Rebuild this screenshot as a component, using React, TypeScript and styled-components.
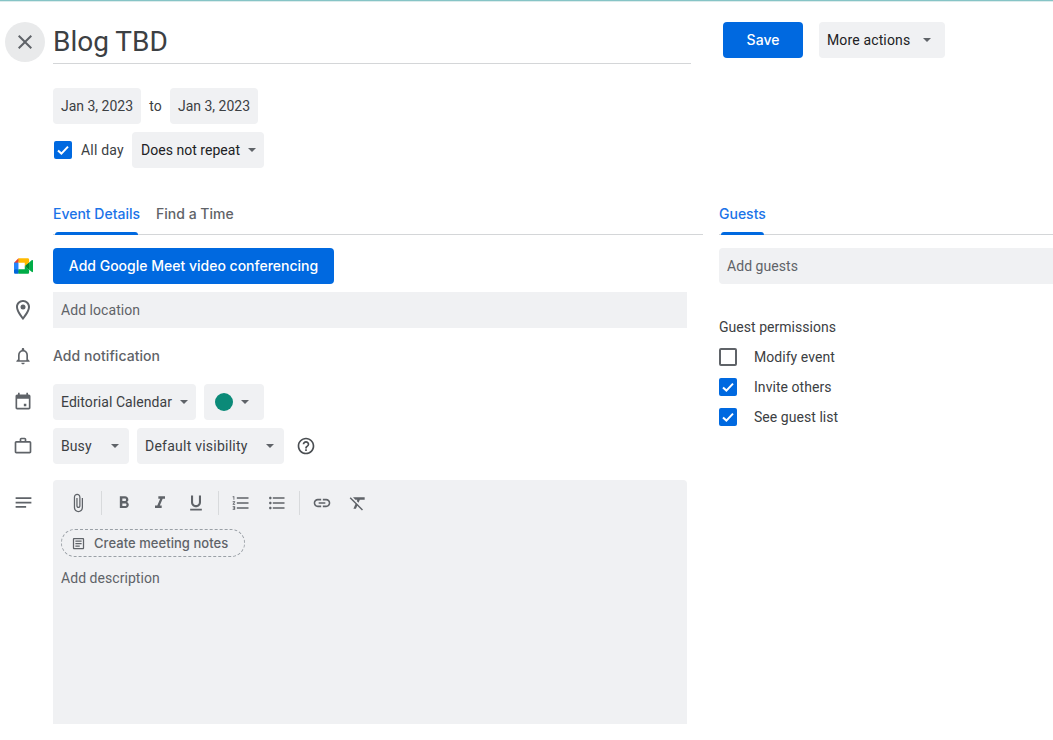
import React from "react";
import styled, { createGlobalStyle } from "styled-components";

const BLUE = "#0069e0";
const GREY = "#f0f1f3";
const TEXT = "#3c4043";
const MUTED = "#5f6368";
const HEAD = `"Inter", "Roboto", "Liberation Sans", sans-serif`;

const Global = createGlobalStyle`
  html, body { margin: 0; padding: 0; background: #fff; }
  body { font-family: "Roboto", "Liberation Sans", sans-serif; font-size: 14px; color: ${TEXT}; }
  * { box-sizing: border-box; }
`;

const Page = styled.div`
  width: 1053px;
  height: 740px;
  overflow: hidden;
  border-top: 1px solid #86c4c6;
  box-shadow: inset 0 1px 0 #dcecec;
`;
const Header = styled.header`
  display: flex;
  align-items: flex-start;
  padding: 21px 0 0 5px;
`;
const CloseButton = styled.button`
  width: 40px;
  height: 40px;
  border: 0;
  padding: 0;
  margin-right: 8px;
  border-radius: 50%;
  background: #e9eaeb;
  display: flex;
  align-items: center;
  justify-content: center;
  color: ${MUTED};
`;
const TitleField = styled.div`
  width: 638px;
  height: 42px;
  border-bottom: 1px solid #d4d6d8;
  font-family: "Roboto", sans-serif;
  font-size: 28px;
  line-height: 40px;
  color: ${TEXT};
  margin-right: 32px;
`;
const Button = styled.button<{ $w: number }>`
  width: ${(p) => p.$w}px;
  height: 36px;
  border: 0;
  border-radius: 4px;
  background: ${BLUE};
  color: #fff;
  font-family: ${HEAD};
  font-weight: 500;
  font-size: 14px;
  padding: 0 0 2px;
`;
const Select = styled.div<{ $w: number; $dark?: boolean }>`
  width: ${(p) => p.$w}px;
  height: 36px;
  border-radius: 4px;
  background: ${GREY};
  padding: 0 8px;
  display: flex;
  align-items: center;
  justify-content: space-between;
  font-size: 14px;
  letter-spacing: 0.07px;
  white-space: nowrap;
  color: ${(p) => (p.$dark ? "#202124" : TEXT)};
`;
const Caret = styled.span<{ $flush?: boolean }>`
  width: 0;
  height: 0;
  flex: none;
  margin: 0 ${(p) => (p.$flush ? 0 : 2)}px 1px 0;
  border-left: 4px solid transparent;
  border-right: 4px solid transparent;
  border-top: 4px solid ${MUTED};
`;
const MoreSelect = styled(Select)`
  margin-left: 16px;
  padding-right: 12px;
  letter-spacing: 0.14px;
`;
const When = styled.section`
  padding: 24px 0 0 53px;
  display: flex;
  flex-direction: column;
  gap: 8px;
`;
const Line = styled.div`
  display: flex;
  align-items: center;
`;
const DateChip = styled(Select)`
  justify-content: center;
  padding: 0;
  letter-spacing: 0;
`;
const To = styled.span`
  width: 29px;
  text-align: center;
  color: ${TEXT};
`;
const Box = styled.span<{ $on?: boolean }>`
  width: 18px;
  height: 18px;
  flex: none;
  border-radius: 2px;
  display: flex;
  align-items: center;
  justify-content: center;
  background: ${(p) => (p.$on ? BLUE : "#fff")};
  border: ${(p) => (p.$on ? "0" : `2px solid ${MUTED}`)};
`;
const AllDayBox = styled(Box)`
  margin: 0 9px 0 1px;
`;
const AllDay = styled.span`
  width: 51px;
  letter-spacing: 0.2px;
`;
const RepeatSelect = styled(Select)`
  padding-left: 9px;
  letter-spacing: 0.03px;
`;
const VisibilitySelect = styled(Select)`
  letter-spacing: 0.24px;
`;
const Columns = styled.div`
  display: grid;
  grid-template-columns: 703px 334px;
  column-gap: 16px;
  padding-top: 35px;
`;
const Tabs = styled.div<{ $inset?: boolean }>`
  height: 32px;
  margin-left: ${(p) => (p.$inset ? 53 : 0)}px;
  border-bottom: 1px solid #d4d6d8;
  display: flex;
  gap: 16px;
`;
const Tab = styled.div<{ $on?: boolean }>`
  position: relative;
  height: 32px;
  line-height: 21px;
  font-family: ${HEAD};
  font-weight: 500;
  color: ${(p) => (p.$on ? "#1a73e8" : MUTED)};
  ${(p) =>
    p.$on &&
    `&::after { content: ""; position: absolute; left: 2px; right: 2px; bottom: 0; height: 3px; border-radius: 3px 3px 0 0; background: ${BLUE}; }`}
`;
const Details = styled.div`
  display: flex;
  flex-direction: column;
  padding-top: 13px;
`;
const Row = styled.div<{ $h?: number; $mb?: number }>`
  display: flex;
  align-items: center;
  height: ${(p) => p.$h ?? 36}px;
  margin-bottom: ${(p) => p.$mb ?? 8}px;
`;
const IconSlot = styled.div`
  width: 53px;
  flex: none;
  display: flex;
  justify-content: center;
  padding-right: 7px;
  color: ${MUTED};
`;
const Field = styled.div<{ $w?: number }>`
  width: ${(p) => (p.$w ? `${p.$w}px` : "100%")};
  height: 36px;
  background: ${GREY};
  padding: 0 8px;
  line-height: 36px;
  letter-spacing: 0.05px;
  color: ${MUTED};
`;
const GuestField = styled(Field)`
  border-radius: 4px 0 0 4px;
`;
const Notification = styled.div`
  font-family: ${HEAD};
  font-weight: 500;
  letter-spacing: 0.05px;
  padding-bottom: 2px;
  color: ${MUTED};
`;
const Pair = styled.div`
  display: flex;
  align-items: center;
  gap: 8px;
`;
const Dot = styled.span`
  width: 18px;
  height: 18px;
  border-radius: 50%;
  background: #0b8a78;
  margin-left: 3px;
`;
const ColorSelect = styled(Select)`
  padding-right: 13px;
`;
const Help = styled.span`
  display: flex;
  margin-left: 12px;
  color: #4a4e52;
`;
const EditorRow = styled.div`
  display: flex;
  align-items: flex-start;
  margin-top: 16px;
`;
const NotesSlot = styled(IconSlot)`
  padding-top: 12px;
`;
const Editor = styled.div`
  width: 634px;
  height: 244px;
  background: ${GREY};
  border-radius: 4px 4px 0 0;
  padding: 5px 8px 0;
`;
const Toolbar = styled.div`
  display: flex;
  align-items: center;
  height: 36px;
  margin-left: -1px;
`;
const Tool = styled.span`
  width: 36px;
  height: 36px;
  display: flex;
  align-items: center;
  justify-content: center;
  color: ${MUTED};
`;
const Divider = styled.span<{ $wide?: boolean }>`
  width: 1px;
  height: 24px;
  background: #d8dadc;
  margin: 0 4px 0 ${(p) => (p.$wide ? 5 : 4)}px;
`;
const ChipLine = styled.div`
  display: flex;
  margin-top: 8px;
`;
const MeetingChip = styled.div`
  width: 184px;
  height: 28px;
  border: 1px dashed #9aa0a6;
  border-radius: 14px;
  display: flex;
  align-items: center;
  gap: 8px;
  padding-left: 9px;
  font-family: ${HEAD};
  font-size: 13px;
  font-weight: 500;
  letter-spacing: 0.05px;
  color: ${MUTED};
`;
const Description = styled.div`
  margin-top: 13px;
  letter-spacing: 0.05px;
  color: ${MUTED};
`;
const Guests = styled.div`
  display: flex;
  flex-direction: column;
  padding-top: 13px;
`;
const PermTitle = styled.div`
  margin-top: 34px;
  letter-spacing: 0.03px;
  line-height: 18px;
  height: 18px;
  color: ${TEXT};
`;
const Perms = styled.div`
  margin-top: 12px;
  display: flex;
  flex-direction: column;
  gap: 12px;
`;
const Perm = styled.label`
  display: flex;
  align-items: center;
  height: 18px;
  gap: 17px;
  letter-spacing: 0.05px;
  color: ${TEXT};
`;

const I = ({ d, size = 24, children }: { d?: string; size?: number; children?: React.ReactNode }) => (
  <svg width={size} height={size} viewBox="0 0 24 24" fill="currentColor" aria-hidden>
    {d && <path d={d} />}
    {children}
  </svg>
);
const Check = () => (
  <svg width="14" height="14" viewBox="0 0 14 14" fill="none" stroke="#fff" strokeWidth="2" aria-hidden>
    <path d="M2 7.4l3.4 3.2L12 3.6" />
  </svg>
);
const MeetLogo = () => (
  <svg width="19" height="16" viewBox="0 0 87.5 72" aria-hidden>
    <path fill="#00832d" d="M49.5 36l8.53 9.75 11.47 7.33 2-17.02-2-16.64-11.69 6.44z" />
    <path fill="#0066da" d="M0 51.5V66c0 3.315 2.685 6 6 6h14.5l3-10.96-3-9.54-9.95-3z" />
    <path fill="#e94235" d="M20.5 0L0 20.5l10.55 3 9.95-3 2.95-9.41z" />
    <path fill="#2684fc" d="M20.5 20.5H0v31h20.5z" />
    <path fill="#00ac47" d="M82.6 8.68L69.5 19.42v33.66l13.16 10.79c1.97 1.54 4.85.135 4.85-2.37V11c0-2.535-2.945-3.925-4.91-2.32zM49.5 36v15.5h-29V72h43c3.315 0 6-2.685 6-6V53.08z" />
    <path fill="#ffba00" d="M63.5 0h-43v20.5h29V36l20-16.57V6c0-3.315-2.685-6-6-6z" />
  </svg>
);

const P = {
  close: "M19 6.41L17.59 5 12 10.59 6.41 5 5 6.41 10.59 12 5 17.59 6.41 19 12 13.41 17.59 19 19 17.59 13.41 12z",
  place: "M12 2C8.13 2 5 5.13 5 9c0 5.25 7 13 7 13s7-7.75 7-13c0-3.87-3.13-7-7-7zM7 9c0-2.76 2.24-5 5-5s5 2.24 5 5c0 2.88-2.88 7.19-5 9.88C9.92 16.21 7 11.85 7 9z",
  bell: "M12 22c1.1 0 2-.9 2-2h-4c0 1.1.9 2 2 2zm6-6v-5c0-3.07-1.63-5.64-4.5-6.32V4c0-.83-.67-1.5-1.5-1.5s-1.5.67-1.5 1.5v.68C7.64 5.36 6 7.92 6 11v5l-2 2v1h16v-1l-2-2zm-2 1H8v-6c0-2.48 1.51-4.5 4-4.5s4 2.02 4 4.5v6z",
  event: "M16 14h-3v3h3v-3zM16 1v2H8V1H6v2H5c-1.11 0-1.99.9-1.99 2L3 19c0 1.1.89 2 2 2h14c1.1 0 2-.9 2-2V5c0-1.1-.9-2-2-2h-1V1h-2zm3 18H5V8h14v11z",
  work: "M14 6V4h-4v2h4zM4 8v11h16V8H4zm16-2c1.11 0 2 .89 2 2v11c0 1.11-.89 2-2 2H4c-1.11 0-2-.89-2-2l.01-11c0-1.11.88-2 1.99-2h4V4c0-1.11.89-2 2-2h4c1.11 0 2 .89 2 2v2h4z",
  help: "M11 18h2v-2h-2v2zm1-16C6.48 2 2 6.48 2 12s4.48 10 10 10 10-4.48 10-10S17.52 2 12 2zm0 18c-4.41 0-8-3.59-8-8s3.59-8 8-8 8 3.59 8 8-3.59 8-8 8zm0-14c-2.21 0-4 1.79-4 4h2c0-1.1.9-2 2-2s2 .9 2 2c0 2-3 1.75-3 5h2c0-2.25 3-2.5 3-5 0-2.21-1.79-4-4-4z",
  notes: "M3 18h12v-2H3v2zM3 6v2h18V6H3zm0 7h18v-2H3v2z",
  attach: "M16.5 6v11.5c0 2.21-1.79 4-4 4s-4-1.79-4-4V5c0-1.38 1.12-2.5 2.5-2.5s2.5 1.12 2.5 2.5v10.5c0 .55-.45 1-1 1s-1-.45-1-1V6H10v9.5c0 1.38 1.12 2.5 2.5 2.5s2.5-1.12 2.5-2.5V5c0-2.21-1.79-4-4-4S7 2.79 7 5v12.5c0 3.04 2.46 5.5 5.5 5.5s5.5-2.46 5.5-5.5V6h-1.5z",
  bold: "M15.6 10.79c.97-.67 1.65-1.77 1.65-2.79 0-2.26-1.75-4-4-4H7v14h7.04c2.09 0 3.71-1.7 3.71-3.79 0-1.52-.86-2.82-2.15-3.42zM10 6.5h3c.83 0 1.5.67 1.5 1.5s-.67 1.5-1.5 1.5h-3v-3zm3.5 9H10v-3h3.5c.83 0 1.5.67 1.5 1.5s-.67 1.5-1.5 1.5z",
  italic: "M10 4v3h2.21l-3.42 8H6v3h8v-3h-2.21l3.42-8H18V4z",
  underline: "M12 17c3.31 0 6-2.69 6-6V3h-2.5v8c0 1.93-1.57 3.5-3.5 3.5S8.5 12.93 8.5 11V3H6v8c0 3.31 2.69 6 6 6zm-7 2v2h14v-2H5z",
  numbered: "M2 17h2v.5H3v1h1v.5H2v1h3v-4H2v1zm1-9h1V4H2v1h1v3zm-1 3h1.8L2 13.1v.9h3v-1H3.2L5 10.9V10H2v1zm5-6v2h14V5H7zm0 14h14v-2H7v2zm0-6h14v-2H7v2z",
  bulleted: "M4 10.5c-.83 0-1.5.67-1.5 1.5s.67 1.5 1.5 1.5 1.5-.67 1.5-1.5-.67-1.5-1.5-1.5zm0-6c-.83 0-1.5.67-1.5 1.5S3.17 7.5 4 7.5 5.5 6.83 5.5 6 4.83 4.5 4 4.5zm0 12c-.83 0-1.5.68-1.5 1.5s.68 1.5 1.5 1.5 1.5-.68 1.5-1.5-.67-1.5-1.5-1.5zM7 19h14v-2H7v2zm0-6h14v-2H7v2zm0-8v2h14V5H7z",
  link: "M3.9 12c0-1.71 1.39-3.1 3.1-3.1h4V7H7c-2.76 0-5 2.24-5 5s2.24 5 5 5h4v-1.9H7c-1.71 0-3.1-1.39-3.1-3.1zM8 13h8v-2H8v2zm9-6h-4v1.9h4c1.71 0 3.1 1.39 3.1 3.1s-1.39 3.1-3.1 3.1h-4V17h4c2.76 0 5-2.24 5-5s-2.24-5-5-5z",
  clear: "M3.27 5L2 6.27l6.97 6.97L6.5 19h3l1.57-3.66L16.73 21 18 19.73 3.55 5.27 3.27 5zM6 5v.18L8.82 8h2.4l-.72 1.68 2.1 2.1L14.21 8H20V5H6z",
  doc: "M19 5v14H5V5h14m0-2H5c-1.1 0-2 .9-2 2v14c0 1.1.9 2 2 2h14c1.1 0 2-.9 2-2V5c0-1.1-.9-2-2-2zM14 17H7v-2h7v2zm3-4H7v-2h10v2zm0-4H7V7h10v2z",
};

export default function App() {
  return (
    <Page>
      <Global />
      <Header>
        <CloseButton aria-label="Close"><I d={P.close} /></CloseButton>
        <TitleField>Blog TBD</TitleField>
        <Button $w={80}>Save</Button>
        <MoreSelect $w={126} $dark>More actions<Caret /></MoreSelect>
      </Header>
      <When>
        <Line>
          <DateChip $w={88}>Jan 3, 2023</DateChip>
          <To>to</To>
          <DateChip $w={88}>Jan 3, 2023</DateChip>
        </Line>
        <Line>
          <AllDayBox $on><Check /></AllDayBox>
          <AllDay>All day</AllDay>
          <RepeatSelect $w={132} $dark>Does not repeat<Caret $flush /></RepeatSelect>
        </Line>
      </When>
      <Columns>
        <div>
          <Tabs $inset>
            <Tab $on>Event Details</Tab>
            <Tab>Find a Time</Tab>
          </Tabs>
          <Details>
            <Row>
              <IconSlot><MeetLogo /></IconSlot>
              <Button $w={281}>Add Google Meet video conferencing</Button>
            </Row>
            <Row>
              <IconSlot><I d={P.place}><circle cx="12" cy="9" r="2.5" /></I></IconSlot>
              <Field $w={634}>Add location</Field>
            </Row>
            <Row $h={40}>
              <IconSlot><I d={P.bell} size={20} /></IconSlot>
              <Notification>Add notification</Notification>
            </Row>
            <Row>
              <IconSlot><I d={P.event} size={20} /></IconSlot>
              <Pair>
                <Select $w={143}>Editorial Calendar<Caret $flush /></Select>
                <ColorSelect $w={60}><Dot /><Caret /></ColorSelect>
              </Pair>
            </Row>
            <Row $mb={0}>
              <IconSlot><I d={P.work} size={20} /></IconSlot>
              <Pair>
                <Select $w={76}>Busy<Caret /></Select>
                <VisibilitySelect $w={147}>Default visibility<Caret /></VisibilitySelect>
              </Pair>
              <Help><I d={P.help} size={20} /></Help>
            </Row>
            <EditorRow>
              <NotesSlot><I d={P.notes} size={21} /></NotesSlot>
              <Editor>
                <Toolbar>
                  <Tool><I d={P.attach} size={20} /></Tool>
                  <Divider $wide />
                  <Tool><I d={P.bold} size={20} /></Tool>
                  <Tool><I d={P.italic} size={20} /></Tool>
                  <Tool><I d={P.underline} size={20} /></Tool>
                  <Divider />
                  <Tool><I d={P.numbered} size={20} /></Tool>
                  <Tool><I d={P.bulleted} size={20} /></Tool>
                  <Divider />
                  <Tool><I d={P.link} size={20} /></Tool>
                  <Tool><I d={P.clear} size={20} /></Tool>
                </Toolbar>
                <ChipLine>
                  <MeetingChip><I d={P.doc} size={15} />Create meeting notes</MeetingChip>
                </ChipLine>
                <Description>Add description</Description>
              </Editor>
            </EditorRow>
          </Details>
        </div>
        <div>
          <Tabs>
            <Tab $on>Guests</Tab>
          </Tabs>
          <Guests>
            <GuestField>Add guests</GuestField>
            <PermTitle>Guest permissions</PermTitle>
            <Perms>
              <Perm><Box />Modify event</Perm>
              <Perm><Box $on><Check /></Box>Invite others</Perm>
              <Perm><Box $on><Check /></Box>See guest list</Perm>
            </Perms>
          </Guests>
        </div>
      </Columns>
    </Page>
  );
}
